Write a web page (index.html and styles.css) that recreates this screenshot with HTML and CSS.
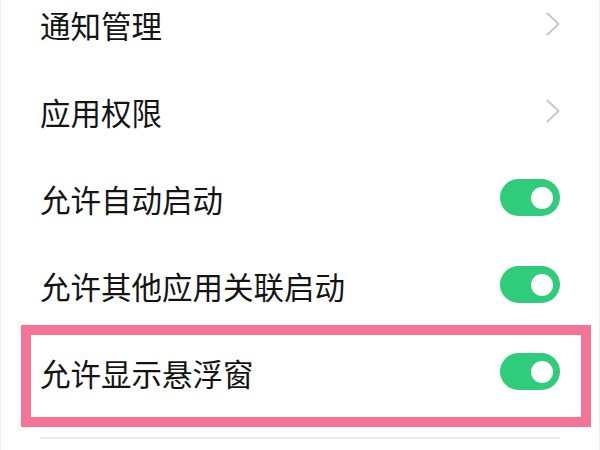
FILE: index.html
```html
<!DOCTYPE html>
<html lang="zh-CN">
<head>
<meta charset="utf-8">
<link rel="stylesheet" href="styles.css">
</head>
<body>
<div class="screen">
  <div class="list">
    <div class="row">
      <span class="label">通知管理</span>
      <svg class="chev" width="14" height="24" viewBox="0 0 14 24"><polyline points="1.5,1.5 12.5,12 1.5,22.5" fill="none" stroke="#c8c8c8" stroke-width="2" stroke-linecap="round" stroke-linejoin="round"/></svg>
    </div>
    <div class="row">
      <span class="label">应用权限</span>
      <svg class="chev" width="14" height="24" viewBox="0 0 14 24"><polyline points="1.5,1.5 12.5,12 1.5,22.5" fill="none" stroke="#c8c8c8" stroke-width="2" stroke-linecap="round" stroke-linejoin="round"/></svg>
    </div>
    <div class="row">
      <span class="label">允许自动启动</span>
      <span class="toggle"><span class="knob"></span></span>
    </div>
    <div class="row">
      <span class="label">允许其他应用关联启动</span>
      <span class="toggle"><span class="knob"></span></span>
    </div>
    <div class="row">
      <span class="label">允许显示悬浮窗</span>
      <span class="toggle"><span class="knob"></span></span>
    </div>
    <div class="divider"></div>
  </div>
  <div class="highlight"></div>
</div>
</body>
</html>
```
FILE: styles.css
```css
html, body {
  margin: 0;
  padding: 0;
  background: #ffffff;
}
.screen {
  position: relative;
  width: 600px;
  height: 450px;
  overflow: hidden;
  box-sizing: border-box;
  border-left: 1px solid #ececec;
  border-right: 1px solid #ececec;
  font-family: "Noto Sans CJK SC", "Noto Sans", sans-serif;
}
.list {
  margin-top: -20px;
}
.row {
  height: 87px;
  display: flex;
  align-items: center;
  justify-content: space-between;
  padding: 0 39px 0 39px;
}
.label {
  font-size: 30.5px;
  color: #141414;
  line-height: 1;
  padding-top: 3px;
}
.chev {
  display: block;
}
.toggle {
  width: 60px;
  height: 37px;
  border-radius: 18.5px;
  background: #2ecc7b;
  display: flex;
  align-items: center;
  justify-content: flex-end;
  padding-right: 7px;
  box-sizing: border-box;
}
.knob {
  width: 22px;
  height: 22px;
  border-radius: 50%;
  background: #ffffff;
}
.divider {
  margin: 22px 39px 0 39px;
  height: 2px;
  background: #ebebeb;
}
.highlight {
  position: absolute;
  left: 20px;
  top: 325px;
  width: 570px;
  height: 102px;
  box-sizing: border-box;
  border: 10px solid #f57396;
}
```
